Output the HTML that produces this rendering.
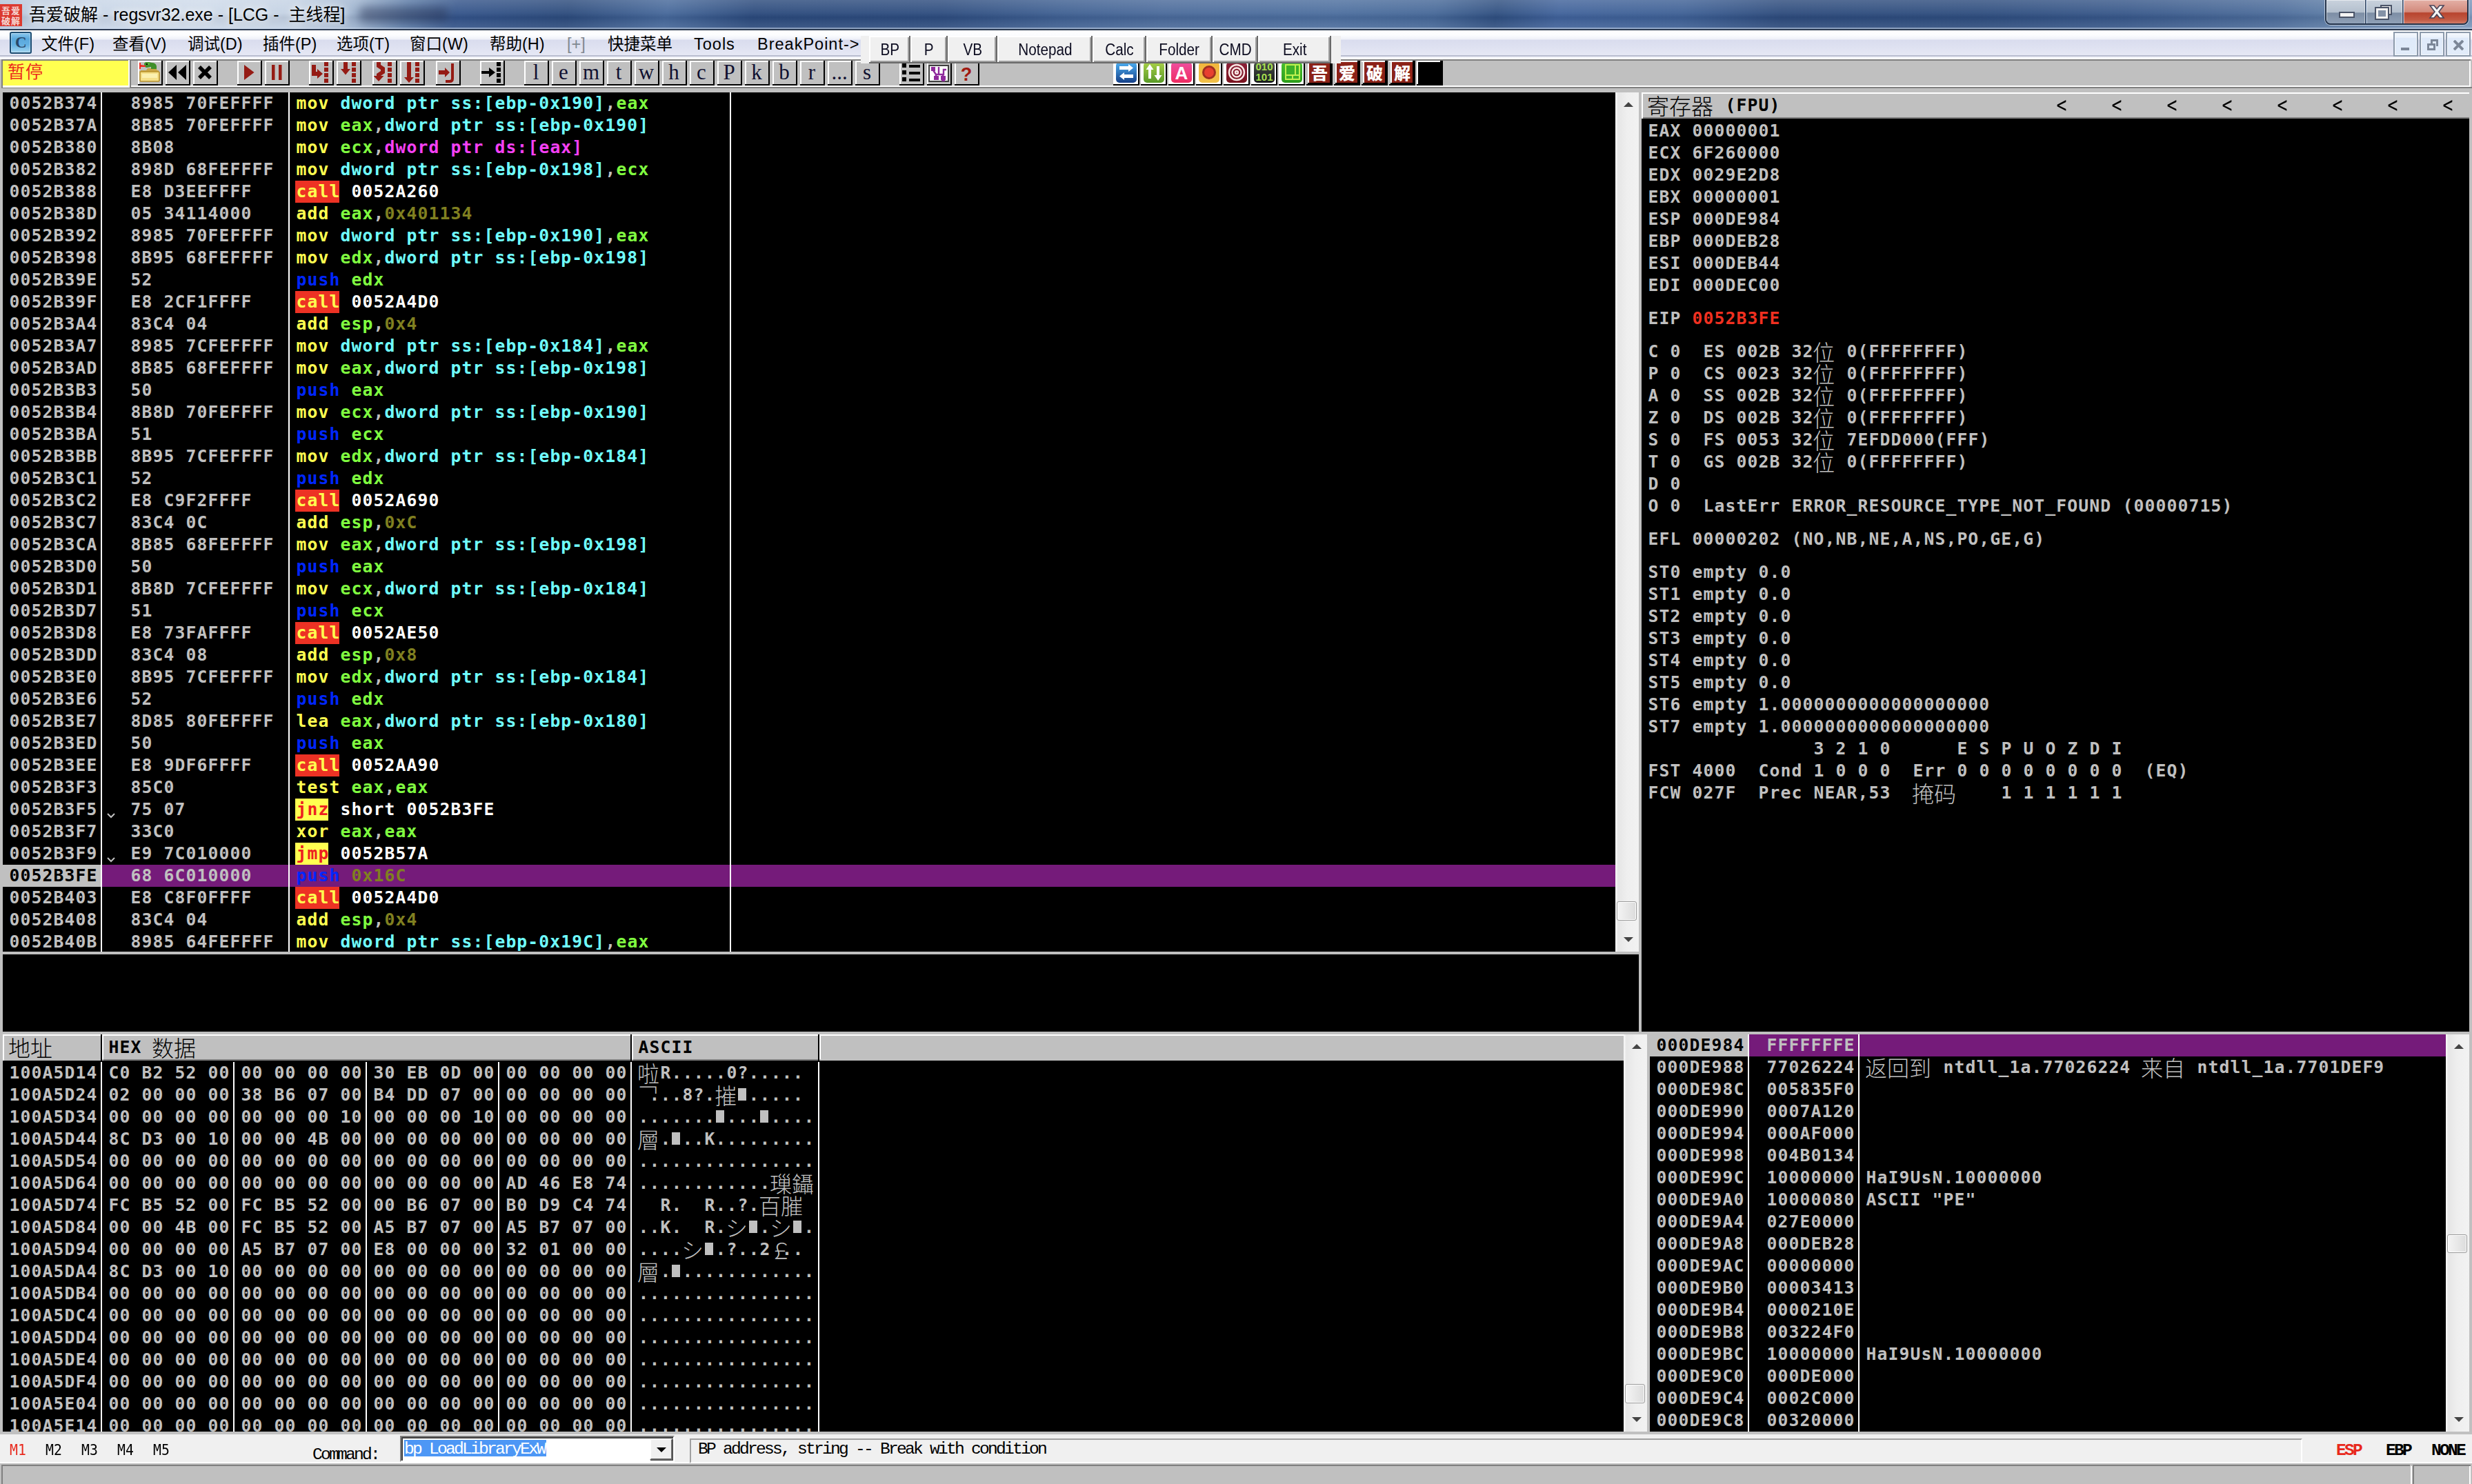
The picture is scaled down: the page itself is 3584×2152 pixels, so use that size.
<!DOCTYPE html><html><head><meta charset="utf-8"><title>吾爱破解 - regsvr32.exe - [LCG - 主线程]</title><style>
*{margin:0;padding:0;box-sizing:border-box}
html,body{width:3584px;height:2152px;overflow:hidden;background:#c0c0c0}
body{position:relative;font-family:"Liberation Sans","Noto Sans CJK SC",sans-serif}
.a{position:absolute}
.bk{position:absolute;background:#000;overflow:hidden}
.m{position:absolute;white-space:pre;font:bold 24.7px "DejaVu Sans Mono","Liberation Mono",monospace;letter-spacing:1.129px;line-height:32px;height:32px;color:#c0c0c0}
.r{position:absolute;left:0;height:32px;width:100%}
.r i{position:absolute;top:0;font-style:normal;white-space:pre;height:32px;line-height:32px;font:bold 24.7px/32px "DejaVu Sans Mono","Liberation Mono",monospace;letter-spacing:1.129px;color:#c0c0c0}
.r i.k{font:300 32px/32px "Noto Sans CJK SC","WenQuanYi Zen Hei",sans-serif;letter-spacing:0;top:-1px;margin-left:-1.5px}
.y{color:#ffff50 !important}.c{color:#70ffff !important}.g{color:#80ff40 !important}.p{color:#f540f5 !important}
.o{color:#808020 !important}.b{color:#0026ff !important}.w{color:#fff !important}.rd{color:#f03020 !important}
.cl{background:#ed3224;color:#ffff50 !important}.jm{background:#ffff50;color:#ed2020 !important}
.k0{color:#000 !important}
.r i.up{top:-10px}
.r i.lt{transform:scaleY(1.28);transform-origin:0 16.5px;font-weight:normal}
.sb{position:absolute;background:linear-gradient(90deg,#fafafa 0,#e6e6e6 12%,#efefef 50%,#f2f2f2 100%)}
.th{position:absolute;background:linear-gradient(90deg,#f4f4f4,#dcdcdc);border:1px solid #9a9a9a;border-radius:3px;box-shadow:inset 0 0 0 1px #fff}
.au,.ad{position:absolute;width:0;height:0;border-left:7px solid transparent;border-right:7px solid transparent}
.au{border-bottom:7px solid #444}.ad{border-top:7px solid #444}
.vl{position:absolute;width:2px;background:#fff}
.tb{position:absolute;top:88px;width:36px;height:36px;background:#c0c0c0;overflow:hidden}
.t38{width:38px}
.tb:after{content:'';position:absolute;left:0;top:0;right:0;bottom:0;box-shadow:inset -2px -2px 0 #000,inset 2px 2px 0 #fff}
.tl{font:31px/30px "Liberation Serif",serif;color:#101030;text-align:center;display:block;width:32px;position:absolute;left:1px;top:2px}
.mi{position:absolute;top:44px;height:38px;line-height:40px;font-size:23.5px;color:#000;white-space:pre}
.pb{position:absolute;z-index:6;top:52px;height:40px;background:#f0f0f0;box-shadow:inset -2px -2px 0 #696969,inset 2px 2px 0 #fff,inset -4px -4px 0 #a0a0a0;font-size:23px;line-height:40px;text-align:center;color:#0c0c20}
.pb span{display:inline-block;transform:scaleX(.9)}
.s12{position:absolute;white-space:pre;font:24.6px/28px "Liberation Mono",monospace;color:#000;letter-spacing:-2.76px}
</style></head><body>
<div class="a" style="left:0px;top:0px;width:3584px;height:42px;background:linear-gradient(100deg,#b4c5da 0,#c6d4e6 3%,#cfdbea 8%,#c3d1e3 12%,#9db3cf 14.5%,#5f7fab 16.5%,#34548a 18.5%,#2c4b7c 23%,#46689a 27%,#2b4a7c 30.5%,#2d4c7e 38%,#3f6092 43%,#4a6a9a 47%,#4c6e9e 54%,#466898 58%,#2f4f80 60.5%,#40629a 63%,#3e6095 68%,#2d4b7c 72%,#2e4d7e 80%,#38588a 86%,#4c6c9a 92%,#5a7aa4 94%,#7c98bc 100%)"></div>
<div class="a" style="left:0px;top:0px;width:3584px;height:42px;background:linear-gradient(180deg,rgba(255,255,255,.18) 0,rgba(255,255,255,.05) 45%,rgba(0,0,20,.06) 60%,rgba(255,255,255,.10) 100%)"></div>
<div class="a" style="left:0px;top:40px;width:3584px;height:2px;background:rgba(200,215,235,.55)"></div>
<div class="a" style="left:0px;top:42px;width:3584px;height:2px;background:#2a3950"></div>
<div class="a" style="left:520px;top:10px;width:130px;height:22px;background:rgba(30,40,70,.45);filter:blur(7px);border-radius:8px"></div>
<div class="a" style="left:0px;top:6px;width:32px;height:32px;background:#dc3a30;overflow:hidden"><span style="position:absolute;left:2px;top:1px;font:bold 13px/15px 'Noto Sans CJK SC',sans-serif;color:#f6d9d4;letter-spacing:1px">吾爱<br>破解</span></div>
<div class="a" style="left:42px;top:3px;height:36px;line-height:37px;font-size:25px;color:#000;white-space:pre;text-shadow:0 0 10px rgba(255,255,255,.9),0 0 16px rgba(255,255,255,.7)">吾爱破解 - regsvr32.exe - [LCG -  主线程]</div>
<div class="a" style="left:3371px;top:-2px;width:208px;height:38px;border:2px solid #22324a;border-radius:0 0 8px 8px;box-shadow:0 0 0 1px rgba(255,255,255,.55);overflow:hidden"><div class="a" style="left:0;top:0;width:57px;height:36px;background:linear-gradient(#c9d2dd 0,#b3bfcd 50%,#7c8da4 52%,#93a4ba 100%);border-right:1px solid #33435a;box-shadow:inset 0 0 0 1px rgba(255,255,255,.5)"><div class="a" style="left:18px;top:17px;width:23px;height:9px;background:#f4f4f4;border:2px solid #4a5468"></div></div><div class="a" style="left:58px;top:0;width:53px;height:36px;background:linear-gradient(#c9d2dd 0,#b3bfcd 50%,#7c8da4 52%,#93a4ba 100%);border-right:1px solid #33435a;box-shadow:inset 0 0 0 1px rgba(255,255,255,.5)"><div class="a" style="left:20px;top:7px;width:17px;height:15px;border:2px solid #4a5468;background:#e8e8e8"></div><div class="a" style="left:14px;top:12px;width:17px;height:15px;border:3px solid #f2f2f2;outline:2px solid #4a5468;background:#8492a6"></div></div><div class="a" style="left:112px;top:0;width:96px;height:36px;background:linear-gradient(#e4b0a6 0,#d28a7c 48%,#b8442e 52%,#c25a44 80%,#d88a78 100%);box-shadow:inset 0 0 0 1px rgba(255,255,255,.45)"><svg class="a" style="left:36px;top:6px" width="24" height="22" viewBox="0 0 24 22"><path d="M2 2h6l4 5 4-5h6l-7 9 7 9h-6l-4-5-4 5H2l7-9z" fill="#f4f4f4" stroke="#4a4458" stroke-width="1.6"/></svg></div></div>
<div class="a" style="left:0px;top:44px;width:3584px;height:36px;background:linear-gradient(180deg,#fff 0,#fbfcfe 20%,#eef0f8 37%,#d9dcee 38%,#dfe2f1 70%,#e6e8f5 100%)"></div>
<div class="a" style="left:0px;top:80px;width:3584px;height:2px;background:#b9bdd0"></div>
<div class="a" style="left:0px;top:82px;width:3584px;height:4px;background:linear-gradient(#eef0f8,#fff)"></div>
<div class="a" style="left:14px;top:46px;width:32px;height:32px;border:2px solid #1c4c72;border-radius:3px;background:linear-gradient(#8cc8ee 0,#5aa8dc 30%,#62b0e2 60%,#a4d6f0 100%);box-shadow:inset 0 0 0 1px rgba(255,255,255,.35)"><span style="position:absolute;left:6px;top:-1px;font:bold 23px/30px 'Liberation Serif',serif;color:#28486a">C</span></div>
<div class="mi" style="left:60px;color:#000;letter-spacing:0">文件(F)</div>
<div class="mi" style="left:163px;color:#000;letter-spacing:0">查看(V)</div>
<div class="mi" style="left:272px;color:#000;letter-spacing:0">调试(D)</div>
<div class="mi" style="left:381px;color:#000;letter-spacing:0">插件(P)</div>
<div class="mi" style="left:488px;color:#000;letter-spacing:0">选项(T)</div>
<div class="mi" style="left:594px;color:#000;letter-spacing:0">窗口(W)</div>
<div class="mi" style="left:710px;color:#000;letter-spacing:0">帮助(H)</div>
<div class="mi" style="left:822px;color:#808890;letter-spacing:0">[+]</div>
<div class="mi" style="left:881px;color:#000;letter-spacing:0">快捷菜单</div>
<div class="mi" style="left:1006px;color:#000;letter-spacing:1px">Tools</div>
<div class="mi" style="left:1098px;color:#000;letter-spacing:1px">BreakPoint-&gt;</div>
<div class="a" style="left:3470px;top:46px;width:36px;height:36px;border:2px solid #8c9aab;background:linear-gradient(#f4f8fd 0,#eaf1fb 20%,#dfeafa 22%,#e2ecf9 100%);box-shadow:inset 0 0 0 1px #f4f8fd"><div class="a" style="left:9px;top:21px;width:12px;height:4px;background:#7c8798"></div></div>
<div class="a" style="left:3508px;top:46px;width:36px;height:36px;border:2px solid #8c9aab;background:linear-gradient(#f4f8fd 0,#eaf1fb 20%,#dfeafa 22%,#e2ecf9 100%);box-shadow:inset 0 0 0 1px #f4f8fd"><div class="a" style="left:14px;top:9px;width:11px;height:10px;border:3px solid #7c8798;border-bottom:0;border-left-width:3px"></div><div class="a" style="left:9px;top:15px;width:12px;height:10px;border:3px solid #7c8798;background:#e0ebf8"></div></div>
<div class="a" style="left:3546px;top:46px;width:36px;height:36px;border:2px solid #8c9aab;background:linear-gradient(#f4f8fd 0,#eaf1fb 20%,#dfeafa 22%,#e2ecf9 100%);box-shadow:inset 0 0 0 1px #f4f8fd"><svg class="a" style="left:9px;top:10px" width="15" height="15" viewBox="0 0 15 15"><path d="M1 1l13 13M14 1L1 14" stroke="#7c8798" stroke-width="4"/></svg></div>
<div class="a" style="left:1248px;top:52px;width:696px;height:40px;background:#f0f0f0;z-index:5"></div>
<div class="pb" style="left:1260px;width:60px"><span>BP</span></div>
<div class="pb" style="left:1320px;width:54px"><span>P</span></div>
<div class="pb" style="left:1374px;width:72px"><span>VB</span></div>
<div class="pb" style="left:1446px;width:138px"><span>Notepad</span></div>
<div class="pb" style="left:1584px;width:78px"><span>Calc</span></div>
<div class="pb" style="left:1662px;width:96px"><span>Folder</span></div>
<div class="pb" style="left:1758px;width:66px"><span>CMD</span></div>
<div class="pb" style="left:1824px;width:106px"><span>Exit</span></div>
<div class="a" style="left:2px;top:86px;width:3580px;height:2px;background:#808080"></div>
<div class="a" style="left:2px;top:124px;width:3580px;height:2px;background:#fff"></div>
<div class="a" style="left:2px;top:126px;width:3582px;height:2px;background:#808080"></div>
<div class="a" style="left:3580px;top:88px;width:2px;height:38px;background:#fff"></div>
<div class="a" style="left:4px;top:87px;width:184px;height:2px;background:#808080"></div>
<div class="a" style="left:2px;top:87px;width:2px;height:40px;background:#808080"></div>
<div class="a" style="left:4px;top:88px;width:182px;height:36px;background:#ffff50"><span style="position:absolute;left:7px;top:-4px;font:400 25px/36px 'Noto Sans CJK SC',sans-serif;color:#ed2a1c;letter-spacing:1px;white-space:pre">暂停</span></div>
<div class="a" style="left:4px;top:125px;width:184px;height:2px;background:#fff"></div>
<div class="a" style="left:186px;top:87px;width:2px;height:40px;background:#fff"></div>
<div class="a" style="left:188px;top:88px;width:2px;height:40px;background:#808080"></div>
<div class="tb" style="left:200px;top:88px;height:36px"><svg class="a" style="left:0;top:0" width="36" height="36" viewBox="0 0 36 36"><path d="M4 14h8l2-3h12l2 3h2v14H4z" fill="#c9a444"/><path d="M3 16h27l1 1v12l-1 1H4l-1-1z" fill="#f5e08a" stroke="#b8922e" stroke-width="1.6"/><path d="M6 19h22v6H6z" fill="#fbf0b0"/><path d="M9 4q2-3 7-2l4 1q6 0 7 5v4h-8V9l-6 1q-4 0-4-6z" fill="#3f8f2a"/><path d="M12 3h5v3h-5z" fill="#57b038"/><rect x="12" y="4" width="2" height="2" fill="#000"/><path d="M2 3l2 0 0 3 7 1v2l-7 0 0 3h-2z" fill="#ee2a20"/></svg></div>
<div class="tb" style="left:240px;top:88px;height:36px"><svg class="a" style="left:0;top:0" width="36" height="36" viewBox="0 0 36 36"><path d="M4 17L16 6v22zM18 17L30 6v22z" fill="#000"/></svg></div>
<div class="tb" style="left:280px;top:88px;height:36px"><svg class="a" style="left:0;top:0" width="36" height="36" viewBox="0 0 36 36"><path d="M9 9l16 16M25 9L9 25" stroke="#000" stroke-width="5.5" fill="none"/></svg></div>
<div class="tb" style="left:344px;top:88px;height:36px"><svg class="a" style="left:0;top:0" width="36" height="36" viewBox="0 0 36 36"><path d="M10 6L24.5 17 10 28z" fill="#951b14"/></svg></div>
<div class="tb" style="left:384px;top:88px;height:36px"><svg class="a" style="left:0;top:0" width="36" height="36" viewBox="0 0 36 36"><path d="M10 6h4.5v22H10zM20 6h4.5v22H20z" fill="#951b14"/></svg></div>
<div class="tb" style="left:448px;top:88px;height:36px"><svg class="a" style="left:0;top:0" width="36" height="36" viewBox="0 0 36 36"><path d="M4 6h6v10h2v-4l8 7-8 7v-4H4z" fill="#951b14"/><rect x="22" y="2" width="6" height="6" fill="#951b14"/><rect x="22" y="10" width="6" height="6" fill="#951b14"/><rect x="22" y="18" width="6" height="6" fill="#951b14"/><rect x="22" y="26" width="6" height="6" fill="#951b14"/></svg></div>
<div class="tb" style="left:488px;top:88px;height:36px"><svg class="a" style="left:0;top:0" width="36" height="36" viewBox="0 0 36 36"><path d="M10 2h6v10h4l-7 8.5L6 12h4z" fill="#951b14"/><rect x="22" y="2" width="6" height="6" fill="#951b14"/><rect x="22" y="10" width="6" height="6" fill="#951b14"/><rect x="22" y="18" width="6" height="6" fill="#951b14"/><rect x="22" y="26" width="6" height="6" fill="#951b14"/></svg></div>
<div class="tb" style="left:540px;top:88px;height:36px"><svg class="a" style="left:0;top:0" width="36" height="36" viewBox="0 0 36 36"><path d="M6 2h6v4l6 4v8l-6 4h4.500l-7.500 8-7.500-8H6v-3l6-4v-2L6 9z" fill="#951b14"/><rect x="22" y="2" width="6" height="6" fill="#951b14"/><rect x="22" y="10" width="6" height="6" fill="#951b14"/><rect x="22" y="18" width="6" height="6" fill="#951b14"/><rect x="22" y="26" width="6" height="6" fill="#951b14"/></svg></div>
<div class="tb" style="left:580px;top:88px;height:36px"><svg class="a" style="left:0;top:0" width="36" height="36" viewBox="0 0 36 36"><path d="M10 2h6v22h4l-7 8-7-8h4z" fill="#951b14"/><rect x="22" y="2" width="6" height="6" fill="#951b14"/><rect x="22" y="10" width="6" height="6" fill="#951b14"/><rect x="22" y="18" width="6" height="6" fill="#951b14"/><rect x="22" y="26" width="6" height="6" fill="#951b14"/></svg></div>
<div class="tb" style="left:632px;top:88px;height:36px"><svg class="a" style="left:0;top:0" width="36" height="36" viewBox="0 0 36 36"><path d="M4 14h9v-4l7 7-7 7v-4H4z" fill="#951b14"/><path d="M24 4v22q0 4-4 4h-6" stroke="#951b14" stroke-width="4" fill="none"/></svg></div>
<div class="tb" style="left:696px;top:88px;height:36px"><svg class="a" style="left:0;top:0" width="36" height="36" viewBox="0 0 36 36"><path d="M2 15h11v-5l9 7-9 7v-5H2z" fill="#000"/><rect x="24" y="2" width="6" height="6" fill="#000"/><rect x="24" y="10" width="6" height="6" fill="#000"/><rect x="24" y="18" width="6" height="6" fill="#000"/><rect x="24" y="26" width="6" height="6" fill="#000"/></svg></div>
<div class="tb" style="left:760px;top:88px;height:36px"><span class="tl">l</span></div>
<div class="tb" style="left:800px;top:88px;height:36px"><span class="tl">e</span></div>
<div class="tb" style="left:840px;top:88px;height:36px"><span class="tl">m</span></div>
<div class="tb" style="left:880px;top:88px;height:36px"><span class="tl">t</span></div>
<div class="tb" style="left:920px;top:88px;height:36px"><span class="tl">w</span></div>
<div class="tb" style="left:960px;top:88px;height:36px"><span class="tl">h</span></div>
<div class="tb" style="left:1000px;top:88px;height:36px"><span class="tl">c</span></div>
<div class="tb" style="left:1040px;top:88px;height:36px"><span class="tl">P</span></div>
<div class="tb" style="left:1080px;top:88px;height:36px"><span class="tl">k</span></div>
<div class="tb" style="left:1120px;top:88px;height:36px"><span class="tl">b</span></div>
<div class="tb" style="left:1160px;top:88px;height:36px"><span class="tl">r</span></div>
<div class="tb" style="left:1200px;top:88px;height:36px"><span class="tl">...</span></div>
<div class="tb" style="left:1240px;top:88px;height:36px"><span class="tl">s</span></div>
<div class="tb" style="left:1304px;top:88px;height:36px"><svg class="a" style="left:0;top:0" width="36" height="36" viewBox="0 0 36 36"><path d="M4 4h6v6H4zM4 14h6v6H4zM4 24h6v6H4zM14 6h16v4H14zM14 16h16v4H14zM14 26h16v4H14z" fill="#000"/></svg></div>
<div class="tb" style="left:1344px;top:88px;height:36px"><svg class="a" style="left:0;top:0" width="36" height="36" viewBox="0 0 36 36"><rect x="3" y="7" width="28" height="23" fill="#fff" stroke="#404040" stroke-width="2"/><g fill="#8e2a9c"><rect x="6" y="9" width="6" height="6"/><rect x="10" y="22" width="7" height="6"/><rect x="20" y="22" width="7" height="6"/><rect x="21" y="26" width="5" height="4"/></g><path d="M9 14l4 6h11v-7h4M17 9v11M13 20v3M23 20v3" fill="none" stroke="#8e2a9c" stroke-width="2.4"/></svg></div>
<div class="tb" style="left:1384px;top:88px;height:36px"><span class="tl" style="font:bold 27px/30px 'Liberation Sans',sans-serif;color:#a01810;top:5px">?</span></div>
<div class="tb t38" style="left:1614px;background:#fff"><div class="a" style="left:4px;top:2px;width:30px;height:30px;border-radius:5px;background:linear-gradient(#4cb0f4,#164088)"></div><svg class="a" style="left:1px;top:-1px" width="36" height="36"><path d="M8 9h13V6l7 5.500-7 5.500v-3H8zM28 21H15v-3l-7 5.500 7 5.500v-3h13z" fill="#fff"/></svg></div>
<div class="tb t38" style="left:1654px;background:#fff"><div class="a" style="left:4px;top:2px;width:30px;height:30px;border-radius:5px;background:linear-gradient(#a8d048,#5a9a28)"></div><svg class="a" style="left:1px;top:-1px" width="36" height="36"><path d="M12 6l5.500 8h-3.500v13h-4V14H6.500zM24 30l-5.500-8h3.500V9h4v13h3.500z" fill="#fff"/></svg></div>
<div class="tb t38" style="left:1694px;background:#fff"><div class="a" style="left:4px;top:2px;width:30px;height:30px;border-radius:5px;background:linear-gradient(#f050a0,#ee2c62)"></div><span class="a" style="left:4px;top:3px;width:30px;text-align:center;font:bold 26px/30px 'Liberation Sans',sans-serif;color:#fff">A</span></div>
<div class="tb t38" style="left:1734px;background:#fff"><div class="a" style="left:4px;top:2px;width:30px;height:30px;border-radius:5px;background:linear-gradient(#f2b63c,#f0c048)"></div><div class="a" style="left:9px;top:7px;width:20px;height:20px;border-radius:50%;background:#e84030;border:3px solid #a03020"></div></div>
<div class="tb t38" style="left:1774px;background:#fff"><div class="a" style="left:4px;top:2px;width:30px;height:30px;border-radius:5px;background:linear-gradient(#8c2038,#7a1420)"></div><svg class="a" style="left:1px;top:-1px" width="36" height="36"><g fill="none" stroke="#f8e8e4" stroke-width="2.4"><circle cx="18" cy="18" r="11"/><circle cx="18" cy="18" r="6.500"/><circle cx="18" cy="18" r="2"/></g></svg></div>
<div class="tb t38" style="left:1814px;background:#fff"><div class="a" style="left:4px;top:2px;width:30px;height:30px;border-radius:5px;background:linear-gradient(#4a4e48,#181c1c)"></div><span class="a" style="left:4px;top:1px;width:30px;text-align:center;font:bold 15px/15px 'Liberation Sans',sans-serif;color:#a8e050;letter-spacing:0">010<br>101</span></div>
<div class="tb t38" style="left:1854px;background:#fff"><div class="a" style="left:4px;top:2px;width:30px;height:30px;border-radius:5px;background:linear-gradient(#48c030,#2c9c1c)"></div><svg class="a" style="left:1px;top:-1px" width="36" height="36"><g fill="#3cb028" stroke="#c0f050" stroke-width="2"><rect x="9" y="7" width="20" height="21"/><path d="M9 22h20M23 7v15M19 22v6" fill="none"/></g></svg></div>
<div class="a" style="left:1894px;top:88px;width:38px;height:36px;background:#000;overflow:hidden"><div class="a" style="left:0;top:0;width:34px;height:32px;background:#fff"></div><div class="a" style="left:0;top:2px;width:2px;height:32px;background:#c0c0c0"></div><div class="a" style="left:4px;top:2px;width:30px;height:30px;background:#8c2218"></div><span class="a" style="left:7px;top:2px;font:900 24px/30px 'Noto Sans CJK SC',sans-serif;color:#fff">吾</span></div>
<div class="a" style="left:1934px;top:88px;width:38px;height:36px;background:#000;overflow:hidden"><div class="a" style="left:0;top:0;width:34px;height:32px;background:#fff"></div><div class="a" style="left:0;top:2px;width:2px;height:32px;background:#c0c0c0"></div><div class="a" style="left:4px;top:2px;width:30px;height:30px;background:#8c2218"></div><span class="a" style="left:7px;top:2px;font:900 24px/30px 'Noto Sans CJK SC',sans-serif;color:#fff">爱</span></div>
<div class="a" style="left:1974px;top:88px;width:38px;height:36px;background:#000;overflow:hidden"><div class="a" style="left:0;top:0;width:34px;height:32px;background:#fff"></div><div class="a" style="left:0;top:2px;width:2px;height:32px;background:#c0c0c0"></div><div class="a" style="left:4px;top:2px;width:30px;height:30px;background:#8c2218"></div><span class="a" style="left:7px;top:2px;font:900 24px/30px 'Noto Sans CJK SC',sans-serif;color:#fff">破</span></div>
<div class="a" style="left:2014px;top:88px;width:38px;height:36px;background:#000;overflow:hidden"><div class="a" style="left:0;top:0;width:34px;height:32px;background:#fff"></div><div class="a" style="left:0;top:2px;width:2px;height:32px;background:#c0c0c0"></div><div class="a" style="left:4px;top:2px;width:30px;height:30px;background:#8c2218"></div><span class="a" style="left:7px;top:2px;font:900 24px/30px 'Noto Sans CJK SC',sans-serif;color:#fff">解</span></div>
<div class="a" style="left:2054px;top:88px;width:38px;height:36px;background:#000"><div class="a" style="left:0;top:0;width:34px;height:2px;background:#fff"></div><div class="a" style="left:0;top:0;width:2px;height:34px;background:#fff"></div></div>
<div class="bk" style="left:4px;top:134px;width:2338px;height:1246px">
<div class="a" style="left:0;top:1120px;width:142px;height:32px;background:#c0c0c0"></div><div class="a" style="left:144px;top:1120px;width:2200px;height:32px;background:#751b7a"></div>
<div class="vl" style="left:142px;top:0;height:1246px"></div>
<div class="vl" style="left:414px;top:0;height:1246px"></div>
<div class="vl" style="left:1054px;top:0;height:1246px"></div>
<div class="r" style="top:0px;"><i style="left:9.5px">0052B374</i><i style="left:185.5px">8985 70FEFFFF</i><i class="y" style="left:425.5px">mov</i><i class="c" style="left:489.5px">dword ptr ss:[ebp-0x190]</i><i style="left:873.5px">,</i><i class="g" style="left:889.5px">eax</i></div>
<div class="r" style="top:32px;"><i style="left:9.5px">0052B37A</i><i style="left:185.5px">8B85 70FEFFFF</i><i class="y" style="left:425.5px">mov</i><i class="g" style="left:489.5px">eax</i><i style="left:537.5px">,</i><i class="c" style="left:553.5px">dword ptr ss:[ebp-0x190]</i></div>
<div class="r" style="top:64px;"><i style="left:9.5px">0052B380</i><i style="left:185.5px">8B08</i><i class="y" style="left:425.5px">mov</i><i class="g" style="left:489.5px">ecx</i><i style="left:537.5px">,</i><i class="p" style="left:553.5px">dword ptr ds:[eax]</i></div>
<div class="r" style="top:96px;"><i style="left:9.5px">0052B382</i><i style="left:185.5px">898D 68FEFFFF</i><i class="y" style="left:425.5px">mov</i><i class="c" style="left:489.5px">dword ptr ss:[ebp-0x198]</i><i style="left:873.5px">,</i><i class="g" style="left:889.5px">ecx</i></div>
<div class="r" style="top:128px;"><i style="left:9.5px">0052B388</i><i style="left:185.5px">E8 D3EEFFFF</i><i class="cl" style="left:424.0px;width:64px;padding-left:1.5px">call</i><i class="w" style="left:505.5px">0052A260</i></div>
<div class="r" style="top:160px;"><i style="left:9.5px">0052B38D</i><i style="left:185.5px">05 34114000</i><i class="y" style="left:425.5px">add</i><i class="g" style="left:489.5px">eax</i><i style="left:537.5px">,</i><i class="o" style="left:553.5px">0x401134</i></div>
<div class="r" style="top:192px;"><i style="left:9.5px">0052B392</i><i style="left:185.5px">8985 70FEFFFF</i><i class="y" style="left:425.5px">mov</i><i class="c" style="left:489.5px">dword ptr ss:[ebp-0x190]</i><i style="left:873.5px">,</i><i class="g" style="left:889.5px">eax</i></div>
<div class="r" style="top:224px;"><i style="left:9.5px">0052B398</i><i style="left:185.5px">8B95 68FEFFFF</i><i class="y" style="left:425.5px">mov</i><i class="g" style="left:489.5px">edx</i><i style="left:537.5px">,</i><i class="c" style="left:553.5px">dword ptr ss:[ebp-0x198]</i></div>
<div class="r" style="top:256px;"><i style="left:9.5px">0052B39E</i><i style="left:185.5px">52</i><i class="b" style="left:425.5px">push</i><i class="g" style="left:505.5px">edx</i></div>
<div class="r" style="top:288px;"><i style="left:9.5px">0052B39F</i><i style="left:185.5px">E8 2CF1FFFF</i><i class="cl" style="left:424.0px;width:64px;padding-left:1.5px">call</i><i class="w" style="left:505.5px">0052A4D0</i></div>
<div class="r" style="top:320px;"><i style="left:9.5px">0052B3A4</i><i style="left:185.5px">83C4 04</i><i class="y" style="left:425.5px">add</i><i class="g" style="left:489.5px">esp</i><i style="left:537.5px">,</i><i class="o" style="left:553.5px">0x4</i></div>
<div class="r" style="top:352px;"><i style="left:9.5px">0052B3A7</i><i style="left:185.5px">8985 7CFEFFFF</i><i class="y" style="left:425.5px">mov</i><i class="c" style="left:489.5px">dword ptr ss:[ebp-0x184]</i><i style="left:873.5px">,</i><i class="g" style="left:889.5px">eax</i></div>
<div class="r" style="top:384px;"><i style="left:9.5px">0052B3AD</i><i style="left:185.5px">8B85 68FEFFFF</i><i class="y" style="left:425.5px">mov</i><i class="g" style="left:489.5px">eax</i><i style="left:537.5px">,</i><i class="c" style="left:553.5px">dword ptr ss:[ebp-0x198]</i></div>
<div class="r" style="top:416px;"><i style="left:9.5px">0052B3B3</i><i style="left:185.5px">50</i><i class="b" style="left:425.5px">push</i><i class="g" style="left:505.5px">eax</i></div>
<div class="r" style="top:448px;"><i style="left:9.5px">0052B3B4</i><i style="left:185.5px">8B8D 70FEFFFF</i><i class="y" style="left:425.5px">mov</i><i class="g" style="left:489.5px">ecx</i><i style="left:537.5px">,</i><i class="c" style="left:553.5px">dword ptr ss:[ebp-0x190]</i></div>
<div class="r" style="top:480px;"><i style="left:9.5px">0052B3BA</i><i style="left:185.5px">51</i><i class="b" style="left:425.5px">push</i><i class="g" style="left:505.5px">ecx</i></div>
<div class="r" style="top:512px;"><i style="left:9.5px">0052B3BB</i><i style="left:185.5px">8B95 7CFEFFFF</i><i class="y" style="left:425.5px">mov</i><i class="g" style="left:489.5px">edx</i><i style="left:537.5px">,</i><i class="c" style="left:553.5px">dword ptr ss:[ebp-0x184]</i></div>
<div class="r" style="top:544px;"><i style="left:9.5px">0052B3C1</i><i style="left:185.5px">52</i><i class="b" style="left:425.5px">push</i><i class="g" style="left:505.5px">edx</i></div>
<div class="r" style="top:576px;"><i style="left:9.5px">0052B3C2</i><i style="left:185.5px">E8 C9F2FFFF</i><i class="cl" style="left:424.0px;width:64px;padding-left:1.5px">call</i><i class="w" style="left:505.5px">0052A690</i></div>
<div class="r" style="top:608px;"><i style="left:9.5px">0052B3C7</i><i style="left:185.5px">83C4 0C</i><i class="y" style="left:425.5px">add</i><i class="g" style="left:489.5px">esp</i><i style="left:537.5px">,</i><i class="o" style="left:553.5px">0xC</i></div>
<div class="r" style="top:640px;"><i style="left:9.5px">0052B3CA</i><i style="left:185.5px">8B85 68FEFFFF</i><i class="y" style="left:425.5px">mov</i><i class="g" style="left:489.5px">eax</i><i style="left:537.5px">,</i><i class="c" style="left:553.5px">dword ptr ss:[ebp-0x198]</i></div>
<div class="r" style="top:672px;"><i style="left:9.5px">0052B3D0</i><i style="left:185.5px">50</i><i class="b" style="left:425.5px">push</i><i class="g" style="left:505.5px">eax</i></div>
<div class="r" style="top:704px;"><i style="left:9.5px">0052B3D1</i><i style="left:185.5px">8B8D 7CFEFFFF</i><i class="y" style="left:425.5px">mov</i><i class="g" style="left:489.5px">ecx</i><i style="left:537.5px">,</i><i class="c" style="left:553.5px">dword ptr ss:[ebp-0x184]</i></div>
<div class="r" style="top:736px;"><i style="left:9.5px">0052B3D7</i><i style="left:185.5px">51</i><i class="b" style="left:425.5px">push</i><i class="g" style="left:505.5px">ecx</i></div>
<div class="r" style="top:768px;"><i style="left:9.5px">0052B3D8</i><i style="left:185.5px">E8 73FAFFFF</i><i class="cl" style="left:424.0px;width:64px;padding-left:1.5px">call</i><i class="w" style="left:505.5px">0052AE50</i></div>
<div class="r" style="top:800px;"><i style="left:9.5px">0052B3DD</i><i style="left:185.5px">83C4 08</i><i class="y" style="left:425.5px">add</i><i class="g" style="left:489.5px">esp</i><i style="left:537.5px">,</i><i class="o" style="left:553.5px">0x8</i></div>
<div class="r" style="top:832px;"><i style="left:9.5px">0052B3E0</i><i style="left:185.5px">8B95 7CFEFFFF</i><i class="y" style="left:425.5px">mov</i><i class="g" style="left:489.5px">edx</i><i style="left:537.5px">,</i><i class="c" style="left:553.5px">dword ptr ss:[ebp-0x184]</i></div>
<div class="r" style="top:864px;"><i style="left:9.5px">0052B3E6</i><i style="left:185.5px">52</i><i class="b" style="left:425.5px">push</i><i class="g" style="left:505.5px">edx</i></div>
<div class="r" style="top:896px;"><i style="left:9.5px">0052B3E7</i><i style="left:185.5px">8D85 80FEFFFF</i><i class="y" style="left:425.5px">lea</i><i class="g" style="left:489.5px">eax</i><i style="left:537.5px">,</i><i class="c" style="left:553.5px">dword ptr ss:[ebp-0x180]</i></div>
<div class="r" style="top:928px;"><i style="left:9.5px">0052B3ED</i><i style="left:185.5px">50</i><i class="b" style="left:425.5px">push</i><i class="g" style="left:505.5px">eax</i></div>
<div class="r" style="top:960px;"><i style="left:9.5px">0052B3EE</i><i style="left:185.5px">E8 9DF6FFFF</i><i class="cl" style="left:424.0px;width:64px;padding-left:1.5px">call</i><i class="w" style="left:505.5px">0052AA90</i></div>
<div class="r" style="top:992px;"><i style="left:9.5px">0052B3F3</i><i style="left:185.5px">85C0</i><i class="y" style="left:425.5px">test</i><i class="g" style="left:505.5px">eax</i><i style="left:553.5px">,</i><i class="g" style="left:569.5px">eax</i></div>
<div class="r" style="top:1024px;"><i style="left:9.5px">0052B3F5</i><i style="left:185.5px">75 07</i><i class="jm" style="left:424.0px;width:48px;padding-left:1.5px">jnz</i><i class="w" style="left:489.5px">short 0052B3FE</i></div>
<svg class="a" style="left:151px;top:1045px" width="12" height="8"><path d="M1 1l5 5 5-5" stroke="#c0c0c0" stroke-width="2" fill="none"/></svg>
<div class="r" style="top:1056px;"><i style="left:9.5px">0052B3F7</i><i style="left:185.5px">33C0</i><i class="y" style="left:425.5px">xor</i><i class="g" style="left:489.5px">eax</i><i style="left:537.5px">,</i><i class="g" style="left:553.5px">eax</i></div>
<div class="r" style="top:1088px;"><i style="left:9.5px">0052B3F9</i><i style="left:185.5px">E9 7C010000</i><i class="jm" style="left:424.0px;width:48px;padding-left:1.5px">jmp</i><i class="w" style="left:489.5px">0052B57A</i></div>
<svg class="a" style="left:151px;top:1109px" width="12" height="8"><path d="M1 1l5 5 5-5" stroke="#c0c0c0" stroke-width="2" fill="none"/></svg>
<div class="r" style="top:1120px;"><i class="k0" style="left:9.5px">0052B3FE</i><i style="left:185.5px">68 6C010000</i><i class="b" style="left:425.5px">push</i><i class="o" style="left:505.5px">0x16C</i></div>
<div class="r" style="top:1152px;"><i style="left:9.5px">0052B403</i><i style="left:185.5px">E8 C8F0FFFF</i><i class="cl" style="left:424.0px;width:64px;padding-left:1.5px">call</i><i class="w" style="left:505.5px">0052A4D0</i></div>
<div class="r" style="top:1184px;"><i style="left:9.5px">0052B408</i><i style="left:185.5px">83C4 04</i><i class="y" style="left:425.5px">add</i><i class="g" style="left:489.5px">esp</i><i style="left:537.5px">,</i><i class="o" style="left:553.5px">0x4</i></div>
<div class="r" style="top:1216px;"><i style="left:9.5px">0052B40B</i><i style="left:185.5px">8985 64FEFFFF</i><i class="y" style="left:425.5px">mov</i><i class="c" style="left:489.5px">dword ptr ss:[ebp-0x19C]</i><i style="left:873.5px">,</i><i class="g" style="left:889.5px">eax</i></div>
</div>
<div class="sb" style="left:2342px;top:134px;width:34px;height:1246px"><div class="au" style="left:12px;top:14px"></div><div class="ad" style="left:12px;top:1225px"></div><div class="th" style="left:2px;top:1173px;width:29px;height:28px"></div></div>
<div class="bk" style="left:4px;top:1384px;width:2372px;height:112px"></div>
<div class="a" style="left:2380px;top:134px;width:1200px;height:2px;background:#fff"></div>
<div class="a" style="left:2380px;top:134px;width:2px;height:38px;background:#fff"></div>
<div class="a" style="left:2382px;top:170px;width:1198px;height:2px;background:#808080"></div>
<div class="a" style="left:2382px;top:136px;width:1198px;height:34px;overflow:hidden">
<div class="r" style="top:1px;"><i class="k k0" style="left:7.5px">寄存器</i><i class="k0" style="left:103.5px"> (FPU)</i><i class="k0 lt" style="left:599.5px">&lt;</i><i class="k0 lt" style="left:679.5px">&lt;</i><i class="k0 lt" style="left:759.5px">&lt;</i><i class="k0 lt" style="left:839.5px">&lt;</i><i class="k0 lt" style="left:919.5px">&lt;</i><i class="k0 lt" style="left:999.5px">&lt;</i><i class="k0 lt" style="left:1079.5px">&lt;</i><i class="k0 lt" style="left:1159.5px">&lt;</i></div>
</div>
<div class="bk" style="left:2380px;top:172px;width:1200px;height:1324px">
<div class="r" style="top:2px;"><i style="left:9.5px">EAX</i><i style="left:73.5px">00000001</i></div>
<div class="r" style="top:34px;"><i style="left:9.5px">ECX</i><i style="left:73.5px">6F260000</i></div>
<div class="r" style="top:66px;"><i style="left:9.5px">EDX</i><i style="left:73.5px">0029E2D8</i></div>
<div class="r" style="top:98px;"><i style="left:9.5px">EBX</i><i style="left:73.5px">00000001</i></div>
<div class="r" style="top:130px;"><i style="left:9.5px">ESP</i><i style="left:73.5px">000DE984</i></div>
<div class="r" style="top:162px;"><i style="left:9.5px">EBP</i><i style="left:73.5px">000DEB28</i></div>
<div class="r" style="top:194px;"><i style="left:9.5px">ESI</i><i style="left:73.5px">000DEB44</i></div>
<div class="r" style="top:226px;"><i style="left:9.5px">EDI</i><i style="left:73.5px">000DEC00</i></div>
<div class="r" style="top:274px;"><i style="left:9.5px">EIP</i><i class="rd" style="left:73.5px">0052B3FE</i></div>
<div class="r" style="top:322px;"><i style="left:9.5px">C</i><i style="left:41.5px">0</i><i style="left:89.5px">ES</i><i style="left:137.5px">002B</i><i style="left:217.5px">32</i><i class="k " style="left:249.5px">位</i><i style="left:297.5px">0(FFFFFFFF)</i></div>
<div class="r" style="top:354px;"><i style="left:9.5px">P</i><i style="left:41.5px">0</i><i style="left:89.5px">CS</i><i style="left:137.5px">0023</i><i style="left:217.5px">32</i><i class="k " style="left:249.5px">位</i><i style="left:297.5px">0(FFFFFFFF)</i></div>
<div class="r" style="top:386px;"><i style="left:9.5px">A</i><i style="left:41.5px">0</i><i style="left:89.5px">SS</i><i style="left:137.5px">002B</i><i style="left:217.5px">32</i><i class="k " style="left:249.5px">位</i><i style="left:297.5px">0(FFFFFFFF)</i></div>
<div class="r" style="top:418px;"><i style="left:9.5px">Z</i><i style="left:41.5px">0</i><i style="left:89.5px">DS</i><i style="left:137.5px">002B</i><i style="left:217.5px">32</i><i class="k " style="left:249.5px">位</i><i style="left:297.5px">0(FFFFFFFF)</i></div>
<div class="r" style="top:450px;"><i style="left:9.5px">S</i><i style="left:41.5px">0</i><i style="left:89.5px">FS</i><i style="left:137.5px">0053</i><i style="left:217.5px">32</i><i class="k " style="left:249.5px">位</i><i style="left:297.5px">7EFDD000(FFF)</i></div>
<div class="r" style="top:482px;"><i style="left:9.5px">T</i><i style="left:41.5px">0</i><i style="left:89.5px">GS</i><i style="left:137.5px">002B</i><i style="left:217.5px">32</i><i class="k " style="left:249.5px">位</i><i style="left:297.5px">0(FFFFFFFF)</i></div>
<div class="r" style="top:514px;"><i style="left:9.5px">D</i><i style="left:41.5px">0</i></div>
<div class="r" style="top:546px;"><i style="left:9.5px">O</i><i style="left:41.5px">0</i><i style="left:89.5px">LastErr</i><i style="left:217.5px">ERROR_RESOURCE_TYPE_NOT_FOUND</i><i style="left:697.5px">(00000715)</i></div>
<div class="r" style="top:594px;"><i style="left:9.5px">EFL</i><i style="left:73.5px">00000202</i><i style="left:217.5px">(NO,NB,NE,A,NS,PO,GE,G)</i></div>
<div class="r" style="top:642px;"><i style="left:9.5px">ST0</i><i style="left:73.5px">empty</i><i style="left:169.5px">0.0</i></div>
<div class="r" style="top:674px;"><i style="left:9.5px">ST1</i><i style="left:73.5px">empty</i><i style="left:169.5px">0.0</i></div>
<div class="r" style="top:706px;"><i style="left:9.5px">ST2</i><i style="left:73.5px">empty</i><i style="left:169.5px">0.0</i></div>
<div class="r" style="top:738px;"><i style="left:9.5px">ST3</i><i style="left:73.5px">empty</i><i style="left:169.5px">0.0</i></div>
<div class="r" style="top:770px;"><i style="left:9.5px">ST4</i><i style="left:73.5px">empty</i><i style="left:169.5px">0.0</i></div>
<div class="r" style="top:802px;"><i style="left:9.5px">ST5</i><i style="left:73.5px">empty</i><i style="left:169.5px">0.0</i></div>
<div class="r" style="top:834px;"><i style="left:9.5px">ST6</i><i style="left:73.5px">empty</i><i style="left:169.5px">1.0000000000000000000</i></div>
<div class="r" style="top:866px;"><i style="left:9.5px">ST7</i><i style="left:73.5px">empty</i><i style="left:169.5px">1.0000000000000000000</i></div>
<div class="r" style="top:898px;"><i style="left:249.5px">3</i><i style="left:281.5px">2</i><i style="left:313.5px">1</i><i style="left:345.5px">0</i><i style="left:457.5px">E</i><i style="left:489.5px">S</i><i style="left:521.5px">P</i><i style="left:553.5px">U</i><i style="left:585.5px">O</i><i style="left:617.5px">Z</i><i style="left:649.5px">D</i><i style="left:681.5px">I</i></div>
<div class="r" style="top:930px;"><i style="left:9.5px">FST</i><i style="left:73.5px">4000</i><i style="left:169.5px">Cond</i><i style="left:249.5px">1</i><i style="left:281.5px">0</i><i style="left:313.5px">0</i><i style="left:345.5px">0</i><i style="left:393.5px">Err</i><i style="left:457.5px">0</i><i style="left:489.5px">0</i><i style="left:521.5px">0</i><i style="left:553.5px">0</i><i style="left:585.5px">0</i><i style="left:617.5px">0</i><i style="left:649.5px">0</i><i style="left:681.5px">0</i><i style="left:729.5px">(EQ)</i></div>
<div class="r" style="top:962px;"><i style="left:9.5px">FCW</i><i style="left:73.5px">027F</i><i style="left:169.5px">Prec</i><i style="left:249.5px">NEAR,53</i><i class="k " style="left:393.5px">掩码</i><i style="left:521.5px">1</i><i style="left:553.5px">1</i><i style="left:585.5px">1</i><i style="left:617.5px">1</i><i style="left:649.5px">1</i><i style="left:681.5px">1</i></div>
</div>
<div class="a" style="left:4px;top:1500px;width:2350px;height:2px;background:#fff"></div>
<div class="a" style="left:4px;top:1500px;width:2px;height:38px;background:#fff"></div>
<div class="a" style="left:150px;top:1536px;width:764px;height:2px;background:#808080"></div>
<div class="a" style="left:918px;top:1536px;width:268px;height:2px;background:#808080"></div>
<div class="a" style="left:146px;top:1500px;width:2px;height:38px;background:#000"></div>
<div class="a" style="left:148px;top:1500px;width:2px;height:36px;background:#fff"></div>
<div class="a" style="left:914px;top:1500px;width:2px;height:38px;background:#000"></div>
<div class="a" style="left:916px;top:1500px;width:2px;height:36px;background:#fff"></div>
<div class="a" style="left:1186px;top:1500px;width:2px;height:38px;background:#000"></div>
<div class="a" style="left:1188px;top:1500px;width:2px;height:36px;background:#fff"></div>
<div class="a" style="left:4px;top:1502px;width:2350px;height:34px;overflow:hidden">
<div class="r" style="top:1px;"><i class="k k0" style="left:9.5px">地址</i><i class="k0" style="left:153.5px">HEX </i><i class="k k0" style="left:217.5px">数据</i><i class="k0" style="left:921.5px">ASCII</i></div>
</div>
<div class="bk" style="left:4px;top:1538px;width:2350px;height:538px">
<div class="vl" style="left:142px;top:2px;height:540px"></div>
<div class="vl" style="left:334px;top:2px;height:540px"></div>
<div class="vl" style="left:526px;top:2px;height:540px"></div>
<div class="vl" style="left:718px;top:2px;height:540px"></div>
<div class="vl" style="left:910px;top:2px;height:540px"></div>
<div class="vl" style="left:1182px;top:2px;height:540px"></div>
<div class="r" style="top:2px;"><i style="left:9.5px">100A5D14</i><i style="left:153.5px">C0</i><i style="left:201.5px">B2</i><i style="left:249.5px">52</i><i style="left:297.5px">00</i><i style="left:345.5px">00</i><i style="left:393.5px">00</i><i style="left:441.5px">00</i><i style="left:489.5px">00</i><i style="left:537.5px">30</i><i style="left:585.5px">EB</i><i style="left:633.5px">0D</i><i style="left:681.5px">00</i><i style="left:729.5px">00</i><i style="left:777.5px">00</i><i style="left:825.5px">00</i><i style="left:873.5px">00</i><i class="k " style="left:921.5px">啦</i><i style="left:953.5px">R.....0?.....</i></div>
<div class="a" style="left:1066px;top:40px;width:12px;height:18px;background:#c0c0c0;overflow:hidden;font-size:8px;line-height:18px;color:#c0c0c0">■</div>
<div class="r" style="top:34px;"><i style="left:9.5px">100A5D24</i><i style="left:153.5px">02</i><i style="left:201.5px">00</i><i style="left:249.5px">00</i><i style="left:297.5px">00</i><i style="left:345.5px">38</i><i style="left:393.5px">B6</i><i style="left:441.5px">07</i><i style="left:489.5px">00</i><i style="left:537.5px">B4</i><i style="left:585.5px">DD</i><i style="left:633.5px">07</i><i style="left:681.5px">00</i><i style="left:729.5px">00</i><i style="left:777.5px">00</i><i style="left:825.5px">00</i><i style="left:873.5px">00</i><i class="k  up" style="left:921.5px">￢</i><i style="left:937.5px">...8?.</i><i class="k " style="left:1033.5px">摧</i><i style="left:1081.5px">.....</i></div>
<div class="a" style="left:1034px;top:72px;width:12px;height:18px;background:#c0c0c0;overflow:hidden;font-size:8px;line-height:18px;color:#c0c0c0">■</div>
<div class="a" style="left:1098px;top:72px;width:12px;height:18px;background:#c0c0c0;overflow:hidden;font-size:8px;line-height:18px;color:#c0c0c0">■</div>
<div class="r" style="top:66px;"><i style="left:9.5px">100A5D34</i><i style="left:153.5px">00</i><i style="left:201.5px">00</i><i style="left:249.5px">00</i><i style="left:297.5px">00</i><i style="left:345.5px">00</i><i style="left:393.5px">00</i><i style="left:441.5px">00</i><i style="left:489.5px">10</i><i style="left:537.5px">00</i><i style="left:585.5px">00</i><i style="left:633.5px">00</i><i style="left:681.5px">10</i><i style="left:729.5px">00</i><i style="left:777.5px">00</i><i style="left:825.5px">00</i><i style="left:873.5px">00</i><i style="left:921.5px">.......</i><i style="left:1049.5px">...</i><i style="left:1113.5px">....</i></div>
<div class="a" style="left:970px;top:104px;width:12px;height:18px;background:#c0c0c0;overflow:hidden;font-size:8px;line-height:18px;color:#c0c0c0">■</div>
<div class="r" style="top:98px;"><i style="left:9.5px">100A5D44</i><i style="left:153.5px">8C</i><i style="left:201.5px">D3</i><i style="left:249.5px">00</i><i style="left:297.5px">10</i><i style="left:345.5px">00</i><i style="left:393.5px">00</i><i style="left:441.5px">4B</i><i style="left:489.5px">00</i><i style="left:537.5px">00</i><i style="left:585.5px">00</i><i style="left:633.5px">00</i><i style="left:681.5px">00</i><i style="left:729.5px">00</i><i style="left:777.5px">00</i><i style="left:825.5px">00</i><i style="left:873.5px">00</i><i class="k " style="left:921.5px">層</i><i style="left:953.5px">.</i><i style="left:985.5px">..K.........</i></div>
<div class="r" style="top:130px;"><i style="left:9.5px">100A5D54</i><i style="left:153.5px">00</i><i style="left:201.5px">00</i><i style="left:249.5px">00</i><i style="left:297.5px">00</i><i style="left:345.5px">00</i><i style="left:393.5px">00</i><i style="left:441.5px">00</i><i style="left:489.5px">00</i><i style="left:537.5px">00</i><i style="left:585.5px">00</i><i style="left:633.5px">00</i><i style="left:681.5px">00</i><i style="left:729.5px">00</i><i style="left:777.5px">00</i><i style="left:825.5px">00</i><i style="left:873.5px">00</i><i style="left:921.5px">................</i></div>
<div class="r" style="top:162px;"><i style="left:9.5px">100A5D64</i><i style="left:153.5px">00</i><i style="left:201.5px">00</i><i style="left:249.5px">00</i><i style="left:297.5px">00</i><i style="left:345.5px">00</i><i style="left:393.5px">00</i><i style="left:441.5px">00</i><i style="left:489.5px">00</i><i style="left:537.5px">00</i><i style="left:585.5px">00</i><i style="left:633.5px">00</i><i style="left:681.5px">00</i><i style="left:729.5px">AD</i><i style="left:777.5px">46</i><i style="left:825.5px">E8</i><i style="left:873.5px">74</i><i style="left:921.5px">............</i><i class="k " style="left:1113.5px">璅鑷</i></div>
<div class="r" style="top:194px;"><i style="left:9.5px">100A5D74</i><i style="left:153.5px">FC</i><i style="left:201.5px">B5</i><i style="left:249.5px">52</i><i style="left:297.5px">00</i><i style="left:345.5px">FC</i><i style="left:393.5px">B5</i><i style="left:441.5px">52</i><i style="left:489.5px">00</i><i style="left:537.5px">00</i><i style="left:585.5px">B6</i><i style="left:633.5px">07</i><i style="left:681.5px">00</i><i style="left:729.5px">B0</i><i style="left:777.5px">D9</i><i style="left:825.5px">C4</i><i style="left:873.5px">74</i><i style="left:953.5px">R.</i><i style="left:1017.5px">R..?.</i><i class="k " style="left:1097.5px">百膗</i></div>
<div class="a" style="left:1082px;top:232px;width:12px;height:18px;background:#c0c0c0;overflow:hidden;font-size:8px;line-height:18px;color:#c0c0c0">■</div>
<div class="a" style="left:1146px;top:232px;width:12px;height:18px;background:#c0c0c0;overflow:hidden;font-size:8px;line-height:18px;color:#c0c0c0">■</div>
<div class="r" style="top:226px;"><i style="left:9.5px">100A5D84</i><i style="left:153.5px">00</i><i style="left:201.5px">00</i><i style="left:249.5px">4B</i><i style="left:297.5px">00</i><i style="left:345.5px">FC</i><i style="left:393.5px">B5</i><i style="left:441.5px">52</i><i style="left:489.5px">00</i><i style="left:537.5px">A5</i><i style="left:585.5px">B7</i><i style="left:633.5px">07</i><i style="left:681.5px">00</i><i style="left:729.5px">A5</i><i style="left:777.5px">B7</i><i style="left:825.5px">07</i><i style="left:873.5px">00</i><i style="left:921.5px">..K.</i><i style="left:1017.5px">R.</i><i class="k " style="left:1049.5px">シ</i><i style="left:1097.5px">.</i><i class="k " style="left:1113.5px">シ</i><i style="left:1161.5px">.</i></div>
<div class="a" style="left:1018px;top:264px;width:12px;height:18px;background:#c0c0c0;overflow:hidden;font-size:8px;line-height:18px;color:#c0c0c0">■</div>
<div class="r" style="top:258px;"><i style="left:9.5px">100A5D94</i><i style="left:153.5px">00</i><i style="left:201.5px">00</i><i style="left:249.5px">00</i><i style="left:297.5px">00</i><i style="left:345.5px">A5</i><i style="left:393.5px">B7</i><i style="left:441.5px">07</i><i style="left:489.5px">00</i><i style="left:537.5px">E8</i><i style="left:585.5px">00</i><i style="left:633.5px">00</i><i style="left:681.5px">00</i><i style="left:729.5px">32</i><i style="left:777.5px">01</i><i style="left:825.5px">00</i><i style="left:873.5px">00</i><i style="left:921.5px">....</i><i class="k " style="left:985.5px">シ</i><i style="left:1033.5px">.?..2</i><i class="k " style="left:1113.5px">￡</i><i style="left:1129.5px">..</i></div>
<div class="a" style="left:970px;top:296px;width:12px;height:18px;background:#c0c0c0;overflow:hidden;font-size:8px;line-height:18px;color:#c0c0c0">■</div>
<div class="r" style="top:290px;"><i style="left:9.5px">100A5DA4</i><i style="left:153.5px">8C</i><i style="left:201.5px">D3</i><i style="left:249.5px">00</i><i style="left:297.5px">10</i><i style="left:345.5px">00</i><i style="left:393.5px">00</i><i style="left:441.5px">00</i><i style="left:489.5px">00</i><i style="left:537.5px">00</i><i style="left:585.5px">00</i><i style="left:633.5px">00</i><i style="left:681.5px">00</i><i style="left:729.5px">00</i><i style="left:777.5px">00</i><i style="left:825.5px">00</i><i style="left:873.5px">00</i><i class="k " style="left:921.5px">層</i><i style="left:953.5px">.</i><i style="left:985.5px">............</i></div>
<div class="r" style="top:322px;"><i style="left:9.5px">100A5DB4</i><i style="left:153.5px">00</i><i style="left:201.5px">00</i><i style="left:249.5px">00</i><i style="left:297.5px">00</i><i style="left:345.5px">00</i><i style="left:393.5px">00</i><i style="left:441.5px">00</i><i style="left:489.5px">00</i><i style="left:537.5px">00</i><i style="left:585.5px">00</i><i style="left:633.5px">00</i><i style="left:681.5px">00</i><i style="left:729.5px">00</i><i style="left:777.5px">00</i><i style="left:825.5px">00</i><i style="left:873.5px">00</i><i style="left:921.5px">................</i></div>
<div class="r" style="top:354px;"><i style="left:9.5px">100A5DC4</i><i style="left:153.5px">00</i><i style="left:201.5px">00</i><i style="left:249.5px">00</i><i style="left:297.5px">00</i><i style="left:345.5px">00</i><i style="left:393.5px">00</i><i style="left:441.5px">00</i><i style="left:489.5px">00</i><i style="left:537.5px">00</i><i style="left:585.5px">00</i><i style="left:633.5px">00</i><i style="left:681.5px">00</i><i style="left:729.5px">00</i><i style="left:777.5px">00</i><i style="left:825.5px">00</i><i style="left:873.5px">00</i><i style="left:921.5px">................</i></div>
<div class="r" style="top:386px;"><i style="left:9.5px">100A5DD4</i><i style="left:153.5px">00</i><i style="left:201.5px">00</i><i style="left:249.5px">00</i><i style="left:297.5px">00</i><i style="left:345.5px">00</i><i style="left:393.5px">00</i><i style="left:441.5px">00</i><i style="left:489.5px">00</i><i style="left:537.5px">00</i><i style="left:585.5px">00</i><i style="left:633.5px">00</i><i style="left:681.5px">00</i><i style="left:729.5px">00</i><i style="left:777.5px">00</i><i style="left:825.5px">00</i><i style="left:873.5px">00</i><i style="left:921.5px">................</i></div>
<div class="r" style="top:418px;"><i style="left:9.5px">100A5DE4</i><i style="left:153.5px">00</i><i style="left:201.5px">00</i><i style="left:249.5px">00</i><i style="left:297.5px">00</i><i style="left:345.5px">00</i><i style="left:393.5px">00</i><i style="left:441.5px">00</i><i style="left:489.5px">00</i><i style="left:537.5px">00</i><i style="left:585.5px">00</i><i style="left:633.5px">00</i><i style="left:681.5px">00</i><i style="left:729.5px">00</i><i style="left:777.5px">00</i><i style="left:825.5px">00</i><i style="left:873.5px">00</i><i style="left:921.5px">................</i></div>
<div class="r" style="top:450px;"><i style="left:9.5px">100A5DF4</i><i style="left:153.5px">00</i><i style="left:201.5px">00</i><i style="left:249.5px">00</i><i style="left:297.5px">00</i><i style="left:345.5px">00</i><i style="left:393.5px">00</i><i style="left:441.5px">00</i><i style="left:489.5px">00</i><i style="left:537.5px">00</i><i style="left:585.5px">00</i><i style="left:633.5px">00</i><i style="left:681.5px">00</i><i style="left:729.5px">00</i><i style="left:777.5px">00</i><i style="left:825.5px">00</i><i style="left:873.5px">00</i><i style="left:921.5px">................</i></div>
<div class="r" style="top:482px;"><i style="left:9.5px">100A5E04</i><i style="left:153.5px">00</i><i style="left:201.5px">00</i><i style="left:249.5px">00</i><i style="left:297.5px">00</i><i style="left:345.5px">00</i><i style="left:393.5px">00</i><i style="left:441.5px">00</i><i style="left:489.5px">00</i><i style="left:537.5px">00</i><i style="left:585.5px">00</i><i style="left:633.5px">00</i><i style="left:681.5px">00</i><i style="left:729.5px">00</i><i style="left:777.5px">00</i><i style="left:825.5px">00</i><i style="left:873.5px">00</i><i style="left:921.5px">................</i></div>
<div class="r" style="top:514px;"><i style="left:9.5px">100A5E14</i><i style="left:153.5px">00</i><i style="left:201.5px">00</i><i style="left:249.5px">00</i><i style="left:297.5px">00</i><i style="left:345.5px">00</i><i style="left:393.5px">00</i><i style="left:441.5px">00</i><i style="left:489.5px">00</i><i style="left:537.5px">00</i><i style="left:585.5px">00</i><i style="left:633.5px">00</i><i style="left:681.5px">00</i><i style="left:729.5px">00</i><i style="left:777.5px">00</i><i style="left:825.5px">00</i><i style="left:873.5px">00</i><i style="left:921.5px">................</i></div>
</div>
<div class="sb" style="left:2354px;top:1500px;width:34px;height:576px"><div class="au" style="left:12px;top:14px"></div><div class="ad" style="left:12px;top:555px"></div><div class="th" style="left:2px;top:507px;width:29px;height:28px"></div></div>
<div class="bk" style="left:2392px;top:1500px;width:1154px;height:576px">
<div class="a" style="left:-4px;top:0;width:146px;height:32px;background:#c0c0c0"></div><div class="a" style="left:144px;top:0;width:1100px;height:32px;background:#751b7a"></div>
<div class="vl" style="left:142px;top:0;height:576px"></div>
<div class="vl" style="left:302px;top:0;height:576px"></div>

<div class="r" style="top:0px;"><i class="k0" style="left:9.5px">000DE984</i></div>
<div class="r" style="top:0px;"><i style="left:169.5px">FFFFFFFE</i></div>

<div class="r" style="top:32px;"><i style="left:9.5px">000DE988</i></div>
<div class="r" style="top:32px;"><i style="left:169.5px">77026224</i></div>
<div class="r" style="top:32px;"><i class="k " style="left:313.5px">返回到</i><i style="left:425.5px">ntdll_1a.77026224</i><i class="k " style="left:713.5px">来自</i><i style="left:793.5px">ntdll_1a.7701DEF9</i></div>

<div class="r" style="top:64px;"><i style="left:9.5px">000DE98C</i></div>
<div class="r" style="top:64px;"><i style="left:169.5px">005835F0</i></div>

<div class="r" style="top:96px;"><i style="left:9.5px">000DE990</i></div>
<div class="r" style="top:96px;"><i style="left:169.5px">0007A120</i></div>

<div class="r" style="top:128px;"><i style="left:9.5px">000DE994</i></div>
<div class="r" style="top:128px;"><i style="left:169.5px">000AF000</i></div>

<div class="r" style="top:160px;"><i style="left:9.5px">000DE998</i></div>
<div class="r" style="top:160px;"><i style="left:169.5px">004B0134</i></div>

<div class="r" style="top:192px;"><i style="left:9.5px">000DE99C</i></div>
<div class="r" style="top:192px;"><i style="left:169.5px">10000000</i></div>
<div class="r" style="top:192px;"><i style="left:313.5px">HaI9UsN.10000000</i></div>

<div class="r" style="top:224px;"><i style="left:9.5px">000DE9A0</i></div>
<div class="r" style="top:224px;"><i style="left:169.5px">10000080</i></div>
<div class="r" style="top:224px;"><i style="left:313.5px">ASCII</i><i style="left:409.5px">"PE"</i></div>

<div class="r" style="top:256px;"><i style="left:9.5px">000DE9A4</i></div>
<div class="r" style="top:256px;"><i style="left:169.5px">027E0000</i></div>

<div class="r" style="top:288px;"><i style="left:9.5px">000DE9A8</i></div>
<div class="r" style="top:288px;"><i style="left:169.5px">000DEB28</i></div>

<div class="r" style="top:320px;"><i style="left:9.5px">000DE9AC</i></div>
<div class="r" style="top:320px;"><i style="left:169.5px">00000000</i></div>

<div class="r" style="top:352px;"><i style="left:9.5px">000DE9B0</i></div>
<div class="r" style="top:352px;"><i style="left:169.5px">00003413</i></div>

<div class="r" style="top:384px;"><i style="left:9.5px">000DE9B4</i></div>
<div class="r" style="top:384px;"><i style="left:169.5px">0000210E</i></div>

<div class="r" style="top:416px;"><i style="left:9.5px">000DE9B8</i></div>
<div class="r" style="top:416px;"><i style="left:169.5px">003224F0</i></div>

<div class="r" style="top:448px;"><i style="left:9.5px">000DE9BC</i></div>
<div class="r" style="top:448px;"><i style="left:169.5px">10000000</i></div>
<div class="r" style="top:448px;"><i style="left:313.5px">HaI9UsN.10000000</i></div>

<div class="r" style="top:480px;"><i style="left:9.5px">000DE9C0</i></div>
<div class="r" style="top:480px;"><i style="left:169.5px">000DE000</i></div>

<div class="r" style="top:512px;"><i style="left:9.5px">000DE9C4</i></div>
<div class="r" style="top:512px;"><i style="left:169.5px">0002C000</i></div>

<div class="r" style="top:544px;"><i style="left:9.5px">000DE9C8</i></div>
<div class="r" style="top:544px;"><i style="left:169.5px">00320000</i></div>
</div>
<div class="a" style="left:2388px;top:1500px;width:4px;height:32px;background:#c0c0c0"></div>
<div class="sb" style="left:3546px;top:1500px;width:34px;height:576px"><div class="au" style="left:12px;top:14px"></div><div class="ad" style="left:12px;top:555px"></div><div class="th" style="left:2px;top:290px;width:29px;height:27px"></div></div>
<div class="a" style="left:0px;top:2080px;width:3584px;height:40px;background:#f0f0f0"></div>
<div class="a" style="left:0px;top:2120px;width:3584px;height:2px;background:#fff"></div>
<div class="a" style="left:14px;top:2091px;font:22px/24px 'DejaVu Sans Mono',monospace;color:#e8281c;transform:scaleX(.9);transform-origin:0 0">M1</div>
<div class="a" style="left:66px;top:2091px;font:22px/24px 'DejaVu Sans Mono',monospace;color:#000;transform:scaleX(.9);transform-origin:0 0">M2</div>
<div class="a" style="left:118px;top:2091px;font:22px/24px 'DejaVu Sans Mono',monospace;color:#000;transform:scaleX(.9);transform-origin:0 0">M3</div>
<div class="a" style="left:170px;top:2091px;font:22px/24px 'DejaVu Sans Mono',monospace;color:#000;transform:scaleX(.9);transform-origin:0 0">M4</div>
<div class="a" style="left:222px;top:2091px;font:22px/24px 'DejaVu Sans Mono',monospace;color:#000;transform:scaleX(.9);transform-origin:0 0">M5</div>
<div class="s12" style="left:453px;top:2096px">Command:</div>
<div class="a" style="left:580px;top:2082px;width:398px;height:38px;background:#fff;border-left:2px solid #808080;border-top:2px solid #808080;border-right:2px solid #fff;border-bottom:2px solid #fff;box-shadow:inset 2px 2px 0 #404040"></div>
<div class="a" style="left:586px;top:2088px;width:206px;height:24px;background:#4d97f5"></div>
<div class="s12" style="left:586px;top:2088px;color:#fff">bp LoadLibraryExW</div>
<div class="a" style="left:942px;top:2086px;width:33px;height:31px;background:#f0f0f0;border-left:2px solid #fff;border-top:2px solid #fff;border-right:2px solid #696969;border-bottom:2px solid #696969;box-shadow:1px 1px 0 #404040"><div class="ad" style="left:8px;top:11px;border-top-color:#000"></div></div>
<div class="a" style="left:1000px;top:2086px;width:2338px;height:36px;border-left:2px solid #a0a0a0;border-top:2px solid #a0a0a0;border-right:2px solid #fff;border-bottom:2px solid #fff"></div>
<div class="s12" style="left:1012px;top:2088px">BP address, string -- Break with condition</div>
<div class="s12" style="left:3387px;top:2090px;color:#e8281c;font-weight:bold">ESP</div>
<div class="s12" style="left:3459px;top:2090px;color:#000;font-weight:bold">EBP</div>
<div class="s12" style="left:3525px;top:2090px;color:#000;font-weight:bold">NONE</div>
<div class="a" style="left:2px;top:2124px;width:3492px;height:28px;border-left:2px solid #808080;border-top:2px solid #808080"></div>
<div class="a" style="left:3495px;top:2126px;width:2px;height:26px;background:#fff"></div>
<div class="a" style="left:3498px;top:2124px;width:84px;height:28px;border-left:2px solid #808080;border-top:2px solid #808080"></div>
<div class="a" style="left:3580px;top:2126px;width:2px;height:26px;background:#fff"></div>
</body></html>
